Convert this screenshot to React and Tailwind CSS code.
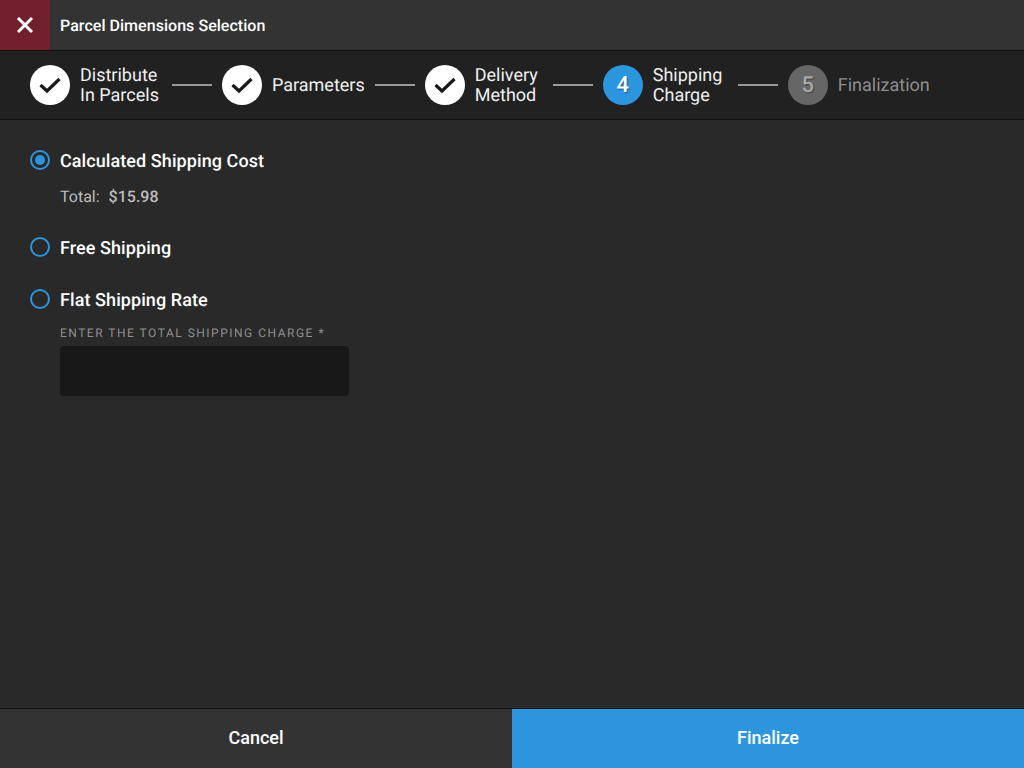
const steps = [
  { lines: ['Distribute', 'In Parcels'], state: 'done', width: 'w-[82px]' },
  { lines: ['Parameters'], state: 'done', width: '' },
  { lines: ['Delivery', 'Method'], state: 'done', width: 'w-[68px]' },
  { lines: ['Shipping', 'Charge'], state: 'active', number: 4, width: 'w-[75px]' },
  { lines: ['Finalization'], state: 'todo', number: 5, width: '' },
]

function StepBadge({ step }) {
  if (step.state === 'done') {
    return (
      <div className="flex h-10 w-10 shrink-0 items-center justify-center rounded-full bg-white">
        <svg width="24" height="24" viewBox="0 0 24 24" fill="none" stroke="#1a1a1a" strokeWidth="3.2">
          <path d="M2.5 12l6.5 6L21.5 6" />
        </svg>
      </div>
    )
  }
  const active = step.state === 'active'
  return (
    <div
      className={`flex h-10 w-10 shrink-0 items-center justify-center rounded-full text-[22px] font-medium [text-shadow:1px_1px_1px_rgba(0,0,0,0.4)] ${
        active ? 'bg-[#2b96dd] text-white' : 'bg-[#666666] text-[#a8a8a8]'
      }`}
    >
      {step.number}
    </div>
  )
}

function Radio({ checked }) {
  return (
    <div className="flex h-5 w-5 shrink-0 items-center justify-center rounded-full border-2 border-[#2b96dd]">
      {checked && <div className="h-[10px] w-[10px] rounded-full bg-[#2b96dd]" />}
    </div>
  )
}

function RadioRow({ checked, label, className }) {
  return (
    <div className={`flex h-5 items-center gap-[10px] ${className}`}>
      <Radio checked={checked} />
      <span className="pt-[2px] text-[18px] font-medium tracking-[0.08px]">{label}</span>
    </div>
  )
}

function App() {
  return (
    <div className="flex h-[768px] w-[1024px] flex-col overflow-hidden bg-[#292929] font-['Roboto',sans-serif] text-white antialiased [text-rendering:geometricPrecision]">
      <header className="flex h-[51px] shrink-0 border-b border-[#111111] bg-[#333333]">
        <div className="flex h-[50px] w-[50px] items-center justify-center bg-[#72202c]">
          <svg width="18" height="18" viewBox="0 0 18 18" stroke="white" strokeWidth="3">
            <path d="M2 2l14 14M16 2L2 16" />
          </svg>
        </div>
        <h1 className="ml-[10px] self-center pt-[1px] text-[16px] font-medium tracking-[0.04px]">Parcel Dimensions Selection</h1>
      </header>

      <nav className="flex h-[69px] shrink-0 items-center border-b border-[#111111] bg-[#212121] pl-[30px]">
        {steps.map((step, i) => (
          <div key={step.lines[0]} className="flex items-center">
            <StepBadge step={step} />
            <div
              className={`ml-[10px] pt-[2px] text-[18px] leading-[20px] ${step.width} ${
                step.state === 'todo' ? 'text-[#8e8e8e]' : 'text-[#f0f0f0]'
              }`}
            >
              {step.lines.map((line) => (
                <div key={line}>{line}</div>
              ))}
            </div>
            {i < steps.length - 1 && <div className="mx-[10px] h-[2px] w-10 bg-[#9a9a9a]" />}
          </div>
        ))}
      </nav>

      <main className="flex-1 pl-[30px] pt-[30px]">
        <RadioRow checked label="Calculated Shipping Cost" />
        <div className="ml-[30px] mt-[17px] flex h-5 items-center gap-[9px] text-[16px] text-[#bcbcbc]">
          <span>Total:</span>
          <span className="font-medium">$15.98</span>
        </div>
        <RadioRow label="Free Shipping" className="mt-[30px]" />
        <RadioRow label="Flat Shipping Rate" className="mt-[32px]" />
        <div className="ml-[30px] mt-[17px]">
          <div className="text-[12px] leading-[14px] tracking-[1.5px] text-[#8f8f8f]">ENTER THE TOTAL SHIPPING CHARGE *</div>
          <div className="mt-[6px] h-[50px] w-[289px] rounded bg-[#181818]" />
        </div>
      </main>

      <footer className="flex h-[60px] shrink-0 border-t border-[#111111] text-[18px] font-medium [text-shadow:1px_1px_1px_rgba(0,0,0,0.5)]">
        <button className="flex-1 bg-[#333333] pb-[2px]">Cancel</button>
        <button className="flex-1 bg-[#2b96dd] pb-[2px]">Finalize</button>
      </footer>
    </div>
  )
}

export default App
